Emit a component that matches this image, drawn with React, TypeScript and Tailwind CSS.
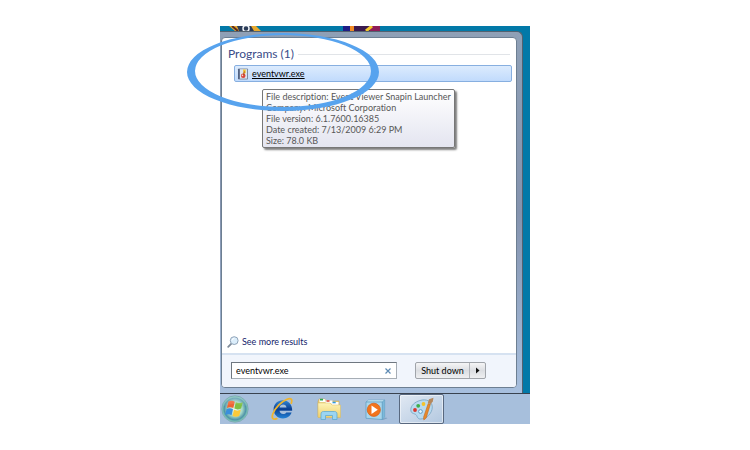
import { useState } from "react";

const details = [
  "File description: Event Viewer Snapin Launcher",
  "Company: Microsoft Corporation",
  "File version: 6.1.7600.16385",
  "Date created: 7/13/2009 6:29 PM",
  "Size: 78.0 KB",
];

function EventFileIcon() {
  return (
    <svg className="h-3 w-3 shrink-0" viewBox="0 0 12 12">
      <rect x="1" y="0.5" width="10" height="11" rx="0.8" fill="#7d8ba3" />
      <path d="M1.8 1v10" stroke="#46587a" strokeWidth="1.2" />
      <rect x="3" y="1.2" width="7" height="9.4" fill="#dce4ee" />
      <path d="M6 1.6h2.6L8.8 5 6.5 6z" fill="#f2c531" />
      <circle cx="6.2" cy="7.8" r="2.3" fill="#dc4238" />
      <path d="M7.4 3.4 6.2 8" stroke="#a8481e" strokeWidth="0.9" />
      <circle cx="5.5" cy="7.4" r="0.8" fill="#fbd9d5" />
    </svg>
  );
}

function SearchIcon() {
  return (
    <svg className="h-3 w-3 shrink-0" viewBox="0 0 12 12" fill="none">
      <path d="m4.6 7.4-3.4 3.4" stroke="#7f8b99" strokeWidth="1.8" strokeLinecap="round" />
      <circle cx="7.2" cy="4.6" r="3.9" fill="#dceefb" stroke="#8fa3b8" strokeWidth="1" />
      <path d="M5 4.4a2.3 2.3 0 0 1 2.2-2" stroke="#fff" strokeWidth="1" />
    </svg>
  );
}

function WindowsOrb() {
  return (
    <svg className="h-7 w-7" viewBox="0 0 28 28">
      <defs>
        <radialGradient id="orb" cx="0.5" cy="0.5" r="0.5">
          <stop offset="0" stopColor="#f4fbe8" />
          <stop offset="0.55" stopColor="#a5d8c8" />
          <stop offset="0.82" stopColor="#4e93a8" />
          <stop offset="1" stopColor="#8fdcbc" />
        </radialGradient>
        <linearGradient id="orbShine" x1="0" y1="0" x2="0" y2="1">
          <stop offset="0" stopColor="#fff" stopOpacity="0.75" />
          <stop offset="1" stopColor="#fff" stopOpacity="0.1" />
        </linearGradient>
      </defs>
      <circle cx="14" cy="14" r="13.2" fill="url(#orb)" stroke="#7a9fb2" strokeWidth="0.8" />
      <path d="M7.4 6.6c2.2-1.2 4.4-1.1 6.4.1l-1.5 6.3c-2.1-1.1-4.3-1.2-6.4 0z" fill="#ee6331" />
      <path d="M14.8 7.3c2.200 1 4.600 1 7-.1l-1.700 6.400c-2.200 1.100-4.500 1.100-6.800 0z" fill="#7fc043" />
      <path d="M5.600 14.100c2.200-1.200 4.300-1.100 6.400.1l-1.500 6c-2.100-1.100-4.200-1.100-6.400-.1z" fill="#3a8fdc" />
      <path d="M13 14.800c2.200 1.100 4.500 1.100 6.800 0l-1.600 6.100c-2.200 1.100-4.500 1.100-6.700 0z" fill="#fbc93a" />
      <path d="M2 11.500C3 5.500 8 1.600 14 1.600s11 3.900 12 9.900c-7-3.500-17-3.500-24 0z" fill="url(#orbShine)" opacity="0.35" />
    </svg>
  );
}

function ExplorerIcon() {
  return (
    <svg className="h-6 w-6" viewBox="0 0 24 24" fill="none">
      <defs>
        <linearGradient id="ieBlue" x1="0" y1="0" x2="0" y2="1">
          <stop offset="0" stopColor="#3388d6" />
          <stop offset="0.5" stopColor="#0c3f91" />
          <stop offset="1" stopColor="#2382d6" />
        </linearGradient>
      </defs>
      <path
        fillRule="evenodd"
        fill="url(#ieBlue)"
        d="M12.800 3.200c5.700 0 9.600 4.200 9.400 10.600H9.500c.2 2 1.600 3.200 3.600 3.200 1.500 0 2.500-.5 3.200-1.500h5.300c-1.300 3.700-4.500 5.900-8.600 5.900-5.400 0-9.400-3.700-9.400-9.100 0-5.300 4-9.100 9.200-9.100zM9.600 10.600h6.900c-.2-1.900-1.500-3-3.400-3s-3.200 1.100-3.500 3z"
      />
      <path
        d="M6.800 21.600c-3.800 1.500-5.600-.3-3.900-4.900C5 11.100 11.500 4.400 17 2.200c4-1.500 5.700.2 4.300 4"
        stroke="#f0b52e"
        strokeWidth="1.700"
        strokeLinecap="round"
      />
    </svg>
  );
}

function FolderIcon() {
  return (
    <svg className="h-6 w-6" viewBox="0 0 24 24">
      <defs>
        <linearGradient id="folder" x1="0" y1="0" x2="0" y2="1">
          <stop offset="0" stopColor="#fdf4b8" />
          <stop offset="1" stopColor="#efcf6c" />
        </linearGradient>
      </defs>
      <path d="M1 4.500 2 2h6l1 2h13v16H1z" fill="#e9cb72" stroke="#c8a54d" strokeWidth="0.500" />
      <path d="M2.500 2.200h5.800v3H2.500z" fill="#fff" />
      <path d="M3 1.800h3v1.700H3z" fill="#2da84b" />
      <path d="M8.500 3.500h7v3h-7z" fill="#fff" />
      <path d="M9.500 3.200h3v1.600h-3z" fill="#df4a36" />
      <path d="M14.500 5h7v3h-7z" fill="#fff" />
      <path d="M15.500 4.700h3.200v1.600h-3.200z" fill="#2f9be0" />
      <path d="M1 6h12l2 2h8.500v12.500H1z" fill="url(#folder)" stroke="#d9bb60" strokeWidth="0.500" />
      <path
        d="M4 22.500V17c0-1.700 1-2.500 2.500-2.500h11c1.500 0 2.500.8 2.500 2.500v5.500h-4.500v-4h-7v4z"
        fill="#9bd5f2"
        stroke="#61a9cf"
        strokeWidth="0.800"
      />
    </svg>
  );
}

function MediaPlayerIcon() {
  return (
    <svg className="h-6 w-6" viewBox="0 0 24 24">
      <path d="m17 22.500 5-2 1.500.8-4.500 1.700z" fill="#7fa3c4" />
      <path d="M2 5 4.500 3h16.200l-2.500 2z" fill="#cdeaf6" stroke="#5d9cc1" strokeWidth="0.500" />
      <path d="m18.200 5 2.500-2v17l-2.500 2.500z" fill="#7cb9da" stroke="#5d9cc1" strokeWidth="0.500" />
      <path d="M2 5h16.200v17.500L2 21.300z" fill="#a9d6ec" stroke="#5d9cc1" strokeWidth="0.700" />
      <circle cx="9.800" cy="12.800" r="6.600" fill="#f2741c" stroke="#d8590f" strokeWidth="0.700" />
      <path d="M7.500 8.600v8.400l6.300-4.200z" fill="#fff" />
    </svg>
  );
}

function PaintIcon() {
  return (
    <svg className="h-6 w-6" viewBox="0 0 24 24">
      <path
        d="M10 3.500c6-2 12.300.8 12.300 6.500 0 6.300-5.800 12-11.800 12-3.500 0-3-3-4.500-4.300C4.400 16.300.8 17 .8 12.700.8 8.500 4.800 5 10 3.500z"
        fill="#b9daef"
        stroke="#7fa9c6"
        strokeWidth="0.900"
      />
      <circle cx="10.500" cy="14.500" r="1.900" fill="#e9f4fb" stroke="#5f9cc5" strokeWidth="1" />
      <circle cx="5" cy="13" r="1.900" fill="#d9362c" />
      <circle cx="8.200" cy="8.800" r="1.900" fill="#3fae49" />
      <circle cx="13.500" cy="7" r="1.900" fill="#f4c22b" />
      <path d="m18.200 6.500 2.200.8-4.200 13.700-2.400 2-.2-3z" fill="#e8892a" stroke="#b9601a" strokeWidth="0.500" />
      <path d="m17.800 5.800 1.200-3.500 4.500-1.500-.7 3.600-2.300 2.900z" fill="#b5885c" />
    </svg>
  );
}

function DesktopStrip() {
  return (
    <svg className="block h-[5px] w-full" viewBox="0 0 310 5" preserveAspectRatio="xMinYMin slice">
      <path d="M9 0h27l5 5H15z" fill="#e8a92d" />
      <path d="m12 0 6 5" stroke="#5a2c22" strokeWidth="2" />
      <path d="M17 0h14l3 5H19z" fill="#2b3c58" />
      <circle cx="26" cy="2.500" r="3" fill="none" stroke="#eef1f5" strokeWidth="1.500" />
      <path d="M123 0h37v5h-37z" fill="#3a1a4e" />
      <path d="M123 0h11v5h-11z" fill="#1f1d86" />
      <path d="M150 0h10v5h-10z" fill="#8f1d58" />
      <path d="M130 0h4v5h-4z" fill="#f08a24" />
      <path d="m152 0-6 5" stroke="#f4c92c" strokeWidth="3" />
    </svg>
  );
}

export default function App() {
  const [query, setQuery] = useState("eventvwr.exe");

  return (
    <main className="flex min-h-screen justify-center bg-white pt-[26px] pb-[26px] font-['Lato','Open_Sans',sans-serif] [font-variant-ligatures:none]">
      <div className="relative flex w-full max-w-[310px] flex-col self-start">
        <div className="bg-[#0279a8]">
          <DesktopStrip />

          <section className="mr-[7px] rounded-tr-md border-t border-r border-[#53616f] bg-linear-to-b from-[#8fa0b6] via-[#8493ae] to-[#a7bfde] pt-[5px] pr-[5px] pb-[5px] pl-px">
            <div className="overflow-hidden rounded-[4px] border border-[#6d7f92] bg-white">
              <div className="relative flex h-[315px] flex-col pt-2">
                <div className="flex items-center gap-1 px-1.5">
                  <h1 className="text-[12px] leading-4 text-[#3b4c88]">Programs (1)</h1>
                  <div className="h-px flex-1 bg-[#e1e4e8]" />
                </div>

                <a
                  href="#eventvwr"
                  aria-describedby="file-details"
                  className="mt-[3px] mr-1 ml-3 flex h-[17px] items-center gap-[3px] rounded-[2px] border border-[#87afe0] bg-linear-to-b from-[#dcebfd] to-[#c1dbfc] pl-[2px] text-[9px] text-black"
                >
                  <EventFileIcon />
                  <span className="underline">eventvwr.exe</span>
                </a>

                <div
                  id="file-details"
                  role="tooltip"
                  className="absolute top-[51px] left-10 rounded-[2px] border border-[#777] bg-linear-to-b from-white to-[#e4e5f0] px-[3px] py-px text-[9px] leading-[11px] whitespace-nowrap text-[#575757] shadow-[2px_2px_2px_rgba(0,0,0,0.5)]"
                >
                  {details.map((line) => (
                    <p key={line}>{line}</p>
                  ))}
                </div>

                <button
                  type="button"
                  className="mt-auto mb-[3px] ml-[5px] flex items-center gap-[3px] self-start text-[9px] leading-4 text-[#14246b]"
                >
                  <SearchIcon />
                  See more results
                </button>
              </div>

              <form
                className="flex h-[34px] items-center gap-[18px] border-t-2 border-[#d6e2f1] bg-[#f1f5fc] pr-[30px] pb-px pl-[9px]"
                onSubmit={(e) => e.preventDefault()}
              >
                <div className="flex h-[17px] min-w-0 flex-1 items-center border border-[#6f7780] border-r-[#a6adb5] border-b-[#a6adb5] bg-white px-1">
                  <input
                    type="text"
                    aria-label="Search programs and files"
                    value={query}
                    onChange={(e) => setQuery(e.target.value)}
                    className="min-w-0 flex-1 text-[9px] leading-3 text-black outline-none"
                  />
                  <button type="button" aria-label="Clear search" onClick={() => setQuery("")}>
                    <svg className="h-2 w-2" viewBox="0 0 8 8" stroke="#5e8bb4" strokeWidth="1.200">
                      <path d="m1.500 1.500 5 5M6.500 1.500l-5 5" />
                    </svg>
                  </button>
                </div>
                <div className="flex h-[17px] rounded-[2px] border border-[#a0a4aa] bg-linear-to-b from-[#f5f5f6] via-[#dcdee2] to-[#eeeff1]">
                  <button type="button" className="w-[53px] text-[9px] leading-3 text-black">
                    Shut down
                  </button>
                  <button
                    type="button"
                    aria-label="More shut down options"
                    className="flex w-4 items-center justify-center border-l border-[#b1b4b9]"
                  >
                    <svg className="h-[7px] w-1" viewBox="0 0 4 7">
                      <path d="M0 0.500v6l3.500-3z" fill="#111" />
                    </svg>
                  </button>
                </div>
              </form>
            </div>
          </section>
        </div>

        <nav className="flex h-[31px] items-stretch border-t border-[#39424f] bg-[#a7bfdc]">
          <button type="button" aria-label="Start" className="flex w-[38px] items-center pl-px">
            <WindowsOrb />
          </button>
          <button type="button" aria-label="Internet Explorer" className="flex w-[47px] items-center justify-center">
            <ExplorerIcon />
          </button>
          <button type="button" aria-label="Windows Explorer" className="flex w-[47px] items-center justify-center">
            <FolderIcon />
          </button>
          <button type="button" aria-label="Windows Media Player" className="flex w-[47px] items-center justify-center">
            <MediaPlayerIcon />
          </button>
          <button
            type="button"
            aria-label="Paint"
            className="flex w-[45px] items-center justify-center rounded-[2px] border border-[#58687f] bg-linear-to-br from-[#e1e9f3] to-[#b3c8e0] inset-ring inset-ring-white/50"
          >
            <PaintIcon />
          </button>
        </nav>

        <svg
          className="pointer-events-none absolute top-[7px] -left-[33px] h-[78px] w-48"
          viewBox="0 0 192 78"
          aria-hidden="true"
        >
          <path
            fillRule="evenodd"
            fill="#57a3ee"
            d="M0 39a96 39 0 1 0 192 0a96 39 0 1 0-192 0zM8 38a88 36 0 1 0 176 0a88 36 0 1 0-176 0z"
          />
        </svg>
      </div>
    </main>
  );
}
